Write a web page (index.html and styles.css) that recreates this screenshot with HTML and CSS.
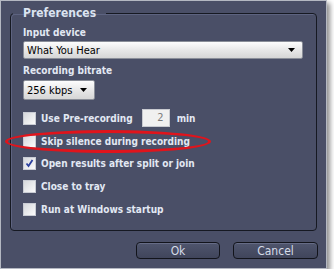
FILE: index.html
```html
<!DOCTYPE html>
<html>
<head>
  <meta charset="UTF-8">
  <title>Preferences</title>
  <link rel="stylesheet" href="styles.css">
</head>
<body>
  <div class="window">
    <fieldset class="group">
      <legend>Preferences</legend>

      <!-- Input device -->
      <label class="field-title">Input device</label>
      <div class="combo combo-wide">
        <span>What You Hear</span>
        <svg class="arrow" width="7" height="4" viewBox="0 0 7 4"><path d="M0 0h7L3.5 4z" fill="#000"/></svg>
      </div>

      <!-- Bitrate -->
      <label class="field-title">Recording bitrate</label>
      <div class="combo combo-small">
        <span>256 kbps</span>
        <svg class="arrow" width="7" height="4" viewBox="0 0 7 4"><path d="M0 0h7L3.5 4z" fill="#000"/></svg>
      </div>

      <!-- Options -->
      <div class="options">
        <div class="option">
          <span class="check"></span>
          <span class="opt-text">Use Pre-recording</span>
          <span class="spin">2</span>
          <span class="opt-text unit">min</span>
        </div>
        <div class="option">
          <span class="check"></span>
          <span class="opt-text">Skip silence during recording</span>
        </div>
        <div class="option">
          <span class="check checked">
            <svg width="11" height="11" viewBox="0 0 11 11"><path d="M2.5 5.5l2 2.5 4-6" fill="none" stroke="#2b3f9e" stroke-width="1.8"/></svg>
          </span>
          <span class="opt-text">Open results after split or join</span>
        </div>
        <div class="option">
          <span class="check"></span>
          <span class="opt-text">Close to tray</span>
        </div>
        <div class="option">
          <span class="check"></span>
          <span class="opt-text">Run at Windows startup</span>
        </div>
      </div>
    </fieldset>

    <div class="buttons">
      <button class="btn btn-ok">Ok</button>
      <button class="btn btn-cancel">Cancel</button>
    </div>

    <!-- red highlight around "Skip silence" -->
    <div class="highlight"></div>
  </div>
</body>
</html>
```

FILE: styles.css
```css
* { box-sizing: border-box; }
body {
  margin: 0;
  background: #fff;
  font-family: "DejaVu Sans Condensed", "DejaVu Sans", sans-serif;
  font-size: 10px;
}
.window {
  position: relative;
  width: 327px;
  height: 269px;
  background-color: #4a4f67;
  border: 1px solid #b4b8c2;
  box-shadow: 3px 3px 5px rgba(0,0,0,0.45);
  padding: 4px 0 0 9px;
}
.group {
  width: 307px;
  height: 226px;
  margin: 0;
  padding: 0 0 0 12px;
  border: 1px solid #161922;
  border-radius: 4px;
  box-shadow: inset 1px 1px 0 #5d6380;
}
.group legend {
  margin-left: -10px;
  padding: 0 10px;
  font-size: 12px;
  font-weight: bold;
  line-height: 16px;
  color: #dbe3f0;
}
.field-title {
  display: block;
  font-weight: bold;
  color: #e2e8f3;
  line-height: 14px;
  margin-top: 5px;
}
.combo {
  display: flex;
  align-items: center;
  justify-content: space-between;
  margin-top: 1px;
  padding: 0 7px 0 3px;
  border: 1px solid #8a8e98;
  border-radius: 2px;
  background: linear-gradient(#fdfdfd, #e6e6e6 55%, #d6d6d6);
  color: #000;
  font-size: 11px;
}
.combo-wide { width: 280px; height: 18px; }
.combo-small { width: 72px; height: 20px; margin-top: 2px; }
.options {
  margin-top: 7px;
}
.option {
  display: flex;
  align-items: center;
  height: 22.75px;
}
.check {
  width: 13px;
  height: 13px;
  border: 1px solid #c9ccd4;
  background: linear-gradient(135deg, #d6d8dc, #fbfbfb);
  display: flex;
  align-items: center;
  justify-content: center;
}
.opt-text {
  margin-left: 5px;
  font-weight: bold;
  color: #e2e8f3;
}
.spin {
  width: 28px;
  height: 18px;
  margin-left: 9px;
  padding-right: 5px;
  border: 1px solid #c8cad0;
  background: #f0f0f0;
  color: #7c7c7c;
  text-align: right;
  line-height: 16px;
  font-size: 11px;
}
.unit { margin-left: 7px; }
.buttons {
  display: flex;
  justify-content: flex-end;
  gap: 13px;
  margin-top: 11px;
  padding-right: 8px;
}
.btn {
  height: 17px;
  padding: 0;
  border: 1px solid #12141b;
  border-radius: 4px;
  background: linear-gradient(#4f556d, #40455b);
  box-shadow: inset 0 1px 0 #666c86;
  color: #d6dce8;
  font-family: inherit;
  font-size: 12px;
}
.btn-ok { width: 84px; }
.btn-cancel { width: 85px; }
.highlight {
  position: absolute;
  left: 4px;
  top: 129px;
  width: 206px;
  height: 23px;
  border: 3.5px solid #e0141c;
  border-radius: 50%;
}
```
